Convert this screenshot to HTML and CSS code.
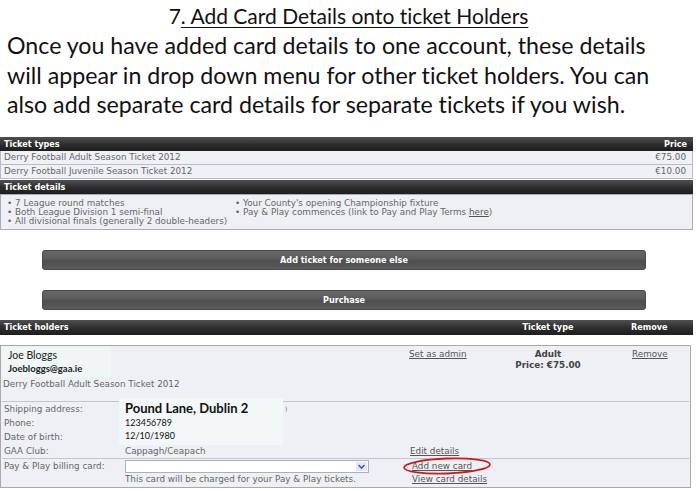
FILE: index.html
```html
<!DOCTYPE html>
<html>
<head>
<meta charset="utf-8">
<link rel="stylesheet" href="styles.css">
</head>
<body>
<h1 class="title">7<span class="ul">. Add Card Details onto ticket Holders</span></h1>
<p class="intro">Once you have added card details to one account, these details<br>will appear in drop down menu for other ticket holders. You can<br>also add separate card details for separate tickets if you wish.</p>

<section class="panel">
  <div class="bar bar-types"><span>Ticket types</span><span>Price</span></div>
  <div class="row"><span>Derry Football Adult Season Ticket 2012</span><span>€75.00</span></div>
  <div class="row"><span>Derry Football Juvenile Season Ticket 2012</span><span>€10.00</span></div>
  <div class="bar bar-details"><span>Ticket details</span></div>
  <div class="details">
    <ul class="col-left">
      <li>7 League round matches</li>
      <li>Both League Division 1 semi-final</li>
      <li>All divisional finals (generally 2 double-headers)</li>
    </ul>
    <ul class="col-right">
      <li>Your County's opening Championship fixture</li>
      <li>Pay &amp; Play commences (link to Pay and Play Terms <a href="#">here</a>)</li>
    </ul>
  </div>
</section>

<div class="btn">Add ticket for someone else</div>
<div class="btn">Purchase</div>

<div class="bar bar-holders">
  <span class="h-main">Ticket holders</span>
  <span class="h-type">Ticket type</span>
  <span class="h-remove">Remove</span>
</div>

<section class="holder">
  <div class="holder-top">
    <div class="holder-main">
      <div class="patch-name">
        <div class="name">Joe Bloggs</div>
        <div class="email">Joebloggs@gaa.ie</div>
      </div>
      <div class="ticket-name">Derry Football Adult Season Ticket 2012</div>
    </div>
    <div class="holder-admin"><a href="#">Set as admin</a></div>
    <div class="holder-type"><div>Adult</div><div>Price: €75.00</div></div>
    <div class="holder-remove"><a href="#">Remove</a></div>
  </div>

  <div class="info">
    <div class="lbl r1">Shipping address:</div>
    <div class="lbl r2">Phone:</div>
    <div class="lbl r3">Date of birth:</div>
    <div class="lbl r4">GAA Club:</div>
    <div class="patch-addr">
      <div class="addr">Pound Lane, Dublin 2</div>
      <div class="small">123456789</div>
      <div class="small">12/10/1980</div>
    </div>
    <div class="remnant">)</div>
    <div class="club">Cappagh/Ceapach</div>
    <div class="edit"><a href="#">Edit details</a></div>
  </div>

  <div class="pay">
    <div class="lbl">Pay &amp; Play billing card:</div>
    <div class="pay-mid">
      <div class="select"><span class="arrow"><svg width="9" height="7" viewBox="0 0 9 7"><path d="M1.5 2 L4.5 5 L7.5 2" fill="none" stroke="#3a5fa8" stroke-width="1.6"/></svg></span></div>
      <div class="note">This card will be charged for your Pay &amp; Play tickets.</div>
    </div>
    <div class="pay-links">
      <a href="#" class="add-card">Add new card<svg class="circle" width="92" height="20" viewBox="0 0 92 20"><ellipse cx="45" cy="10" rx="43" ry="7.5" fill="none" stroke="#d01818" stroke-width="1.8" transform="rotate(-2 45 10)"/></svg></a>
      <a href="#">View card details</a>
    </div>
  </div>
</section>
</body>
</html>
```
FILE: styles.css
```css
* {
  font-feature-settings: "liga" 0, "clig" 0, "dlig" 0, "calt" 0;
}
body {
  margin: 0;
  background: #fff;
  width: 697px;
  color: #222;
}
.title {
  margin: 0;
  padding-top: 4px;
  font: 400 21px/24px Lato, sans-serif;
  font-variant-ligatures: none;
  text-align: center;
  color: #111;
}
.title .ul {
  text-decoration: underline;
  text-decoration-thickness: 1px;
  text-underline-offset: 3px;
}
.intro {
  margin: 3px 0 0;
  padding-left: 7px;
  font: 400 23.2px/29.5px Lato, sans-serif;
  font-variant-ligatures: none;
  color: #111;
}
.panel {
  width: 693px;
  margin-top: 17px;
}
.bar {
  display: flex;
  align-items: center;
  justify-content: space-between;
  height: 14px;
  padding: 0 6px 0 4px;
  background: linear-gradient(#505050, #2c2c2c 55%, #1e1e1e);
  color: #fff;
  font: 700 9px/14px "DejaVu Sans Condensed", "DejaVu Sans", sans-serif;
}
.bar-details {
  margin-top: 1px;
}
.row {
  display: flex;
  justify-content: space-between;
  height: 13px;
  padding: 0 6px 0 3px;
  background: #eff1f7;
  border: 1px solid #b9bcc4;
  border-top: 0;
  color: #666;
  font: 400 8.8px/13px "DejaVu Sans", sans-serif;
}
.details {
  display: flex;
  height: 30px;
  padding-top: 4px;
  background: #eef0f6;
  border: 1px solid #a9acb4;
  color: #666;
  font: 400 8.8px/9px "DejaVu Sans", sans-serif;
}
.details ul {
  margin: 0;
  padding: 0;
  list-style: none;
}
.details li::before {
  content: "\2022";
  display: inline-block;
  width: 8px;
}
.col-left {
  width: 228px;
  padding-left: 6px !important;
}
.details a {
  color: #555;
}
.btn {
  width: 604px;
  height: 20px;
  margin: 20px 0 0 42px;
  border-radius: 4px;
  background: linear-gradient(#6a6a6a, #5a5a5a 45%, #4e4e4e 55%, #5c5c5c);
  box-shadow: inset 0 0 0 1px #4a4a4a;
  color: #fff;
  text-align: center;
  font: 700 9px/20px "DejaVu Sans Condensed", "DejaVu Sans", sans-serif;
}
.bar-holders {
  margin-top: 10px;
  width: 683px;
  height: 15px;
  justify-content: flex-start;
}
.h-main { width: 496px; flex: none; }
.h-type { width: 96px; flex: none; text-align: center; }
.h-remove { padding-left: 35px; }

.holder {
  width: 689px;
  margin-top: 10px;
  border: 1px solid #a9a9a9;
  background: #eef0f6;
  color: #666;
  font: 400 8.8px/10px "DejaVu Sans", sans-serif;
}
.holder a {
  color: #555;
  text-decoration: underline;
}
.holder-top {
  display: flex;
  height: 55px;
}
.holder-main {
  flex: 1;
  padding-left: 2px;
}
.patch-name {
  width: 103px;
  height: 28px;
  margin-top: 1px;
  padding: 2px 0 0 5px;
  background: #f0f6f6;
  color: #222;
}
.name {
  font: 400 10.5px/13px Lato, sans-serif;
}
.email {
  font: 700 9.5px/13px Lato, sans-serif;
}
.ticket-name {
  margin-top: 2px;
}
.holder-admin {
  width: 91px;
  padding-top: 3px;
}
.holder-type {
  width: 96px;
  padding-top: 3px;
  text-align: center;
  font-weight: 700;
  line-height: 11px;
  color: #444;
}
.holder-remove {
  width: 58px;
  padding: 3px 0 0 36px;
}
.info {
  display: grid;
  grid-template-columns: 121px 158px 127px 1fr;
  grid-template-rows: repeat(4, 14px);
  margin: 0 1px;
  padding-left: 2px;
  border-top: 1px solid #c3c6cc;
  border-bottom: 1px solid #c3c6cc;
  line-height: 14px;
}
.r1 { grid-row: 1; grid-column: 1; }
.r2 { grid-row: 2; grid-column: 1; }
.r3 { grid-row: 3; grid-column: 1; }
.r4 { grid-row: 4; grid-column: 1; }
.patch-addr {
  grid-row: 1 / span 3;
  grid-column: 2;
  margin: -4px 0 -1px -6px;
  padding: 3px 0 0 6px;
  background: #f2f7f7;
  color: #111;
}
.addr {
  font: 700 13px/15px Lato, sans-serif;
}
.small {
  font: 400 9px/13px Lato, sans-serif;
}
.remnant {
  grid-row: 1;
  grid-column: 3;
  font-size: 6px;
  padding-left: 2px;
}
.club {
  grid-row: 4;
  grid-column: 2 / span 2;
}
.edit {
  grid-row: 4;
  grid-column: 4;
}
.pay {
  display: grid;
  grid-template-columns: 121px 285px 1fr;
  margin: 0 1px;
  padding: 1px 0 1px 2px;
  line-height: 13px;
}
.select {
  position: relative;
  width: 242px;
  height: 11px;
  background: #fff;
  border: 1px solid #aab0c0;
}
.arrow {
  position: absolute;
  right: 1px;
  top: 1px;
  width: 11px;
  height: 9px;
  background: #e4eaf4;
  display: flex;
  align-items: center;
  justify-content: center;
}
.note {
  line-height: 13px;
}
.pay-links {
  display: flex;
  flex-direction: column;
  padding-left: 2px;
}
.add-card {
  position: relative;
  width: max-content;
}
.circle {
  position: absolute;
  left: -10px;
  top: -4px;
}
```
